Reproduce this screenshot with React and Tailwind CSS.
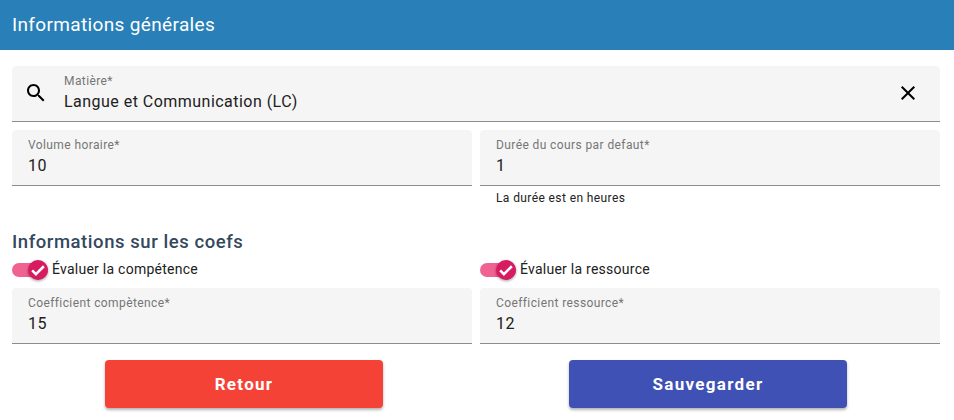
import React from 'react'

function Field({ label, value, className = '' }) {
    return (
        <div className={`h-14 bg-[#f5f5f5] rounded-t border-b border-[#8c8c8c] px-4 pt-[8px] ${className}`}>
            <div className="text-xs leading-[15px] tracking-[0.4px] text-[#757575]">{label}</div>
            <div className="mt-[1px] text-base leading-6 tracking-[0.47px] text-[#212121]">{value}</div>
        </div>
    )
}

function Toggle({ label }) {
    return (
        <div className="flex items-center h-[20px] text-sm tracking-[0.25px] text-[#212121]">
            <div className="relative w-9 h-[14px] rounded-full bg-[#f06292] shrink-0">
                <div className="absolute right-0 top-[-3px] w-5 h-5 rounded-full bg-[#d81b60] shadow-[0_1px_3px_rgba(0,0,0,0.4)] flex items-center justify-center">
                    <svg width="20" height="20" viewBox="0 0 24 24" fill="none" stroke="#fff" strokeWidth="3">
                        <path d="M5 12.5l4.5 4.5L19 7.5" />
                    </svg>
                </div>
            </div>
            <span className="ml-[4px] mt-[-2px]">{label}</span>
        </div>
    )
}

export default function App() {
    return (
        <div className="w-[954px] h-[420px] bg-white overflow-hidden font-['Roboto',sans-serif]">
            <div className="h-[50px] bg-[#2980b9] px-3 flex items-center text-white text-[19px] tracking-[0.35px] font-normal">
                Informations générales
            </div>

            <div className="px-3 pr-[14px] pt-4">
                <div className="h-14 bg-[#f5f5f5] rounded-t border-b border-[#8c8c8c] flex items-center">
                    <svg className="ml-3 mt-[-2px] shrink-0" width="24" height="24" viewBox="0 0 24 24" fill="#000">
                        <path d="M15.5 14h-.79l-.28-.27C15.41 12.59 16 11.11 16 9.5 16 5.91 13.09 3 9.5 3S3 5.91 3 9.5 5.91 16 9.5 16c1.61 0 3.09-.59 4.23-1.57l.27.28v.79l5 4.99L20.49 19l-4.99-5zm-6 0C7.01 14 5 11.99 5 9.5S7.01 5 9.5 5 14 7.01 14 9.5 11.99 14 9.5 14z" />
                    </svg>
                    <div className="ml-4 flex-1 pt-[1px]">
                        <div className="text-xs leading-[15px] tracking-[0.4px] text-[#757575]">Matière*</div>
                        <div className="mt-[1px] text-base leading-6 tracking-[0.47px] text-[#212121]">Langue et Communication (LC)</div>
                    </div>
                    <svg className="mr-5 mt-[-2px] shrink-0" width="24" height="24" viewBox="0 0 24 24" fill="#000">
                        <path d="M19 6.41 17.59 5 12 10.59 6.41 5 5 6.41 10.59 12 5 17.59 6.41 19 12 13.41 17.59 19 19 17.59 13.41 12z" />
                    </svg>
                </div>

                <div className="grid grid-cols-2 gap-x-2 mt-2">
                    <Field label="Volume horaire*" value="10" />
                    <div>
                        <Field label="Durée du cours par defaut*" value="1" />
                        <div className="px-4 mt-[5px] text-xs leading-[15px] tracking-[0.4px] text-[#212121]">La durée est en heures</div>
                    </div>
                </div>

                <h2 className="mt-[24px] text-[18.5px] leading-[24px] font-medium tracking-[0.56px] text-[#34495e]">Informations sur les coefs</h2>

                <div className="grid grid-cols-2 gap-x-2 mt-[6px]">
                    <div>
                        <Toggle label="Évaluer la compétence" />
                        <Field className="mt-[8px]" label="Coefficient compètence*" value="15" />
                    </div>
                    <div>
                        <Toggle label="Évaluer la ressource" />
                        <Field className="mt-[8px]" label="Coefficient ressource*" value="12" />
                    </div>
                </div>

                <div className="grid grid-cols-2 gap-x-2 mt-4">
                    <div className="flex justify-center pl-1">
                        <button className="w-[278px] h-12 pt-[1px] rounded bg-[#f44336] text-white font-bold tracking-[1.3px] text-[17px] shadow-[0_2px_3px_rgba(0,0,0,0.3)]">Retour</button>
                    </div>
                    <div className="flex justify-center pr-1">
                        <button className="w-[278px] h-12 pt-[1px] rounded bg-[#3f51b5] text-white font-bold tracking-[1.3px] text-[17px] shadow-[0_2px_3px_rgba(0,0,0,0.3)]">Sauvegarder</button>
                    </div>
                </div>
            </div>
        </div>
    )
}
